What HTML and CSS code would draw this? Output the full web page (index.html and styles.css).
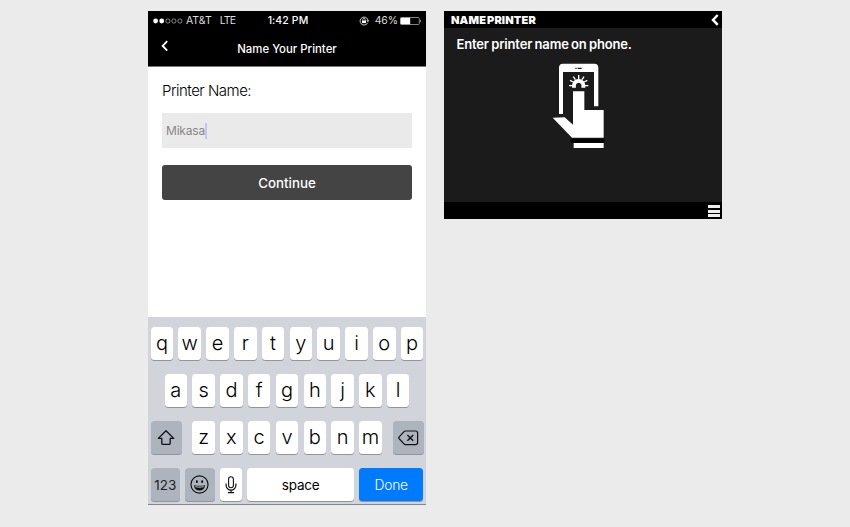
FILE: index.html
```html
<!DOCTYPE html>
<html lang="en">
<head>
<meta charset="utf-8">
<title>Name Your Printer</title>
<link rel="stylesheet" href="styles.css">
</head>
<body>
<main class="stage">
  <section class="phone">
    <header class="top">
      <div class="status">
        <div class="carrier">
          <svg class="signal" width="30" height="8" viewBox="0 0 30 8"><g fill="#fff"><circle cx="2.6" cy="4" r="2.4"/><circle cx="8.7" cy="4" r="2.4"/></g><g fill="none" stroke="#bbb" stroke-width=".7"><circle cx="14.9" cy="4" r="2.1"/><circle cx="20.9" cy="4" r="2.1"/><circle cx="26.9" cy="4" r="2.1"/></g></svg>
          <span class="att">AT&amp;T</span><span class="lte">LTE</span>
        </div>
        <span class="time">1:42 PM</span>
        <div class="power">
          <svg width="11" height="10" viewBox="0 0 11 10"><path d="M8.7 6.8A4 4 0 1 1 9 4.2" fill="none" stroke="#ddd" stroke-width=".9"/><path d="M7.4 4.3h3L8.9 6.2z" fill="#ddd"/><path d="M3 4.5h4v2.6H3z" fill="#fff"/><path d="M3.8 4.7V3.5a1.2 1.2 0 0 1 2.4 0v1.2" fill="none" stroke="#fff" stroke-width=".7"/></svg>
          <span class="pct">46%</span>
          <svg width="22" height="8" viewBox="0 0 22 8"><rect x=".5" y=".5" width="18.8" height="7" rx="1" fill="none" stroke="#bbb" stroke-width=".7"/><path d="M.6.8h9.6v6.4H.6z" fill="#fff"/><path d="M20.2 2.5q1.6 1.5 0 3z" fill="#fff"/></svg>
        </div>
      </div>
      <div class="nav">
        <svg class="back" width="8" height="12" viewBox="0 0 8 12"><path d="M6.2 1.2 1.7 5.9l4.5 4.7" fill="none" stroke="#fff" stroke-width="1.9"/></svg>
        <h1>Name Your Printer</h1>
      </div>
    </header>
    <div class="form">
      <label>Printer Name:</label>
      <div class="field"><span>Mikasa</span><i class="caret"></i></div>
      <button class="continue">Continue</button>
    </div>
    <div class="keyboard">
      <div class="row"><b>q</b><b>w</b><b>e</b><b>r</b><b>t</b><b>y</b><b>u</b><b>i</b><b>o</b><b>p</b></div>
      <div class="row"><b>a</b><b>s</b><b>d</b><b>f</b><b>g</b><b>h</b><b>j</b><b>k</b><b>l</b></div>
      <div class="row spread">
        <b class="grey wide"><svg width="20" height="18" viewBox="0 0 20 18"><path d="M10 1.8 2.3 9.4h3.5v5.2q0 .8.8.8h6.8q.8 0 .8-.8V9.4h3.5z" fill="none" stroke="#111" stroke-width="1.3" stroke-linejoin="round"/></svg></b>
        <span class="group"><b>z</b><b>x</b><b>c</b><b>v</b><b>b</b><b>n</b><b>m</b></span>
        <b class="grey wide"><svg width="21" height="16" viewBox="0 0 21 16"><path d="M7.4 1h10.2q2 0 2 2v9.6q0 2-2 2H7.4q-.8 0-1.4-.7L1 8.5q-.6-.7 0-1.4L6 1.7Q6.6 1 7.4 1z" fill="none" stroke="#111" stroke-width="1.2"/><path d="m9.4 5 5.8 5.7m0-5.7-5.8 5.7" stroke="#111" stroke-width="1.4"/></svg></b>
      </div>
      <div class="row bottom">
        <b class="grey num">123</b>
        <b class="grey emo"><svg width="19" height="19" viewBox="0 0 18 18"><circle cx="9" cy="9" r="8.1" fill="none" stroke="#111" stroke-width="1.1"/><ellipse cx="6.5" cy="6.3" rx=".9" ry="1.3"/><ellipse cx="11.5" cy="6.3" rx=".9" ry="1.3"/><path d="M3.7 9.6q5.3 1.3 10.6 0-.7 5-5.3 5t-5.3-5z" fill="#111"/><path d="M4.8 10.5q4.2 1 8.4 0l-.4 1.2q-3.8.9-7.6 0z" fill="#adb4be"/></svg></b>
        <b class="mic"><svg width="12" height="18" viewBox="0 0 12 18"><rect x="3.6" y=".7" width="4.8" height="11" rx="2.4" fill="none" stroke="#111" stroke-width="1.1"/><path d="M1.1 7.5v1.8a4.9 4.9 0 0 0 9.8 0V7.5M6 14.2v2.4M2.9 16.7h6.2" fill="none" stroke="#111" stroke-width="1.2"/></svg></b>
        <b class="space">space</b>
        <b class="done">Done</b>
      </div>
    </div>
  </section>
  <section class="printer">
    <header class="bar"><h2>NAME PRINTER</h2><svg width="8" height="12" viewBox="0 0 8 12"><path d="M6.7 1 2 5.9l4.7 4.9" fill="none" stroke="#fff" stroke-width="2.5"/></svg></header>
    <div class="screen">
      <p>Enter printer name on phone.</p>
      <svg class="touch" width="80" height="100" viewBox="0 0 240 300">
        <path fill="#fff" d="M57 177V38q0-12 12-12h94q12 0 12 12v116h-13V51H69v126z"/>
        <path stroke="#1b1b1b" stroke-width="4" d="M106 40h4m3 0h12"/>
        <path fill="none" stroke="#fff" stroke-width="4" d="M87 92h10m38 0h10M90 76l10 5m42-5-10 5M100 65l6 9m26-9-6 9M116 60v12"/>
        <path fill="#fff" d="M96 98q-1-26 20-26t20 26h-12q3-13-8-15-11 2-8 15z"/>
        <path fill="#fff" d="M99 109h34v56h58v83H96l-58-60 36-1 25 22z"/>
        <path d="M92 251h101v12H92z"/>
        <path fill="#fff" d="M101 264h90v15h-90z"/>
      </svg>
    </div>
    <footer class="foot"><i></i><i></i><i></i></footer>
  </section>
</main>
</body>
</html>
```
FILE: styles.css
```css
* { box-sizing: border-box; }
body { margin: 0; background: #ebebeb; font-family: Inter, "Liberation Sans", sans-serif; }
h1, h2, p { margin: 0; }
svg { display: block; flex: none; }
.stage { height: 527px; padding: 11px 0 0 148px; display: flex; align-items: flex-start; gap: 18px; }
.phone { width: 278px; height: 494px; background: #fff; display: flex; flex-direction: column; }
.top { height: 56px; background: #000; color: #fff; border-bottom: 1px solid #777; }
.status { height: 19px; padding: 0 4px 0 5px; display: grid; grid-template-columns: 1fr auto 1fr; align-items: center; }
.carrier, .power { display: flex; align-items: center; font-size: 10.5px; color: #ddd; }
.att { margin-left: 3px; }
.lte { margin-left: 8px; letter-spacing: -.8px; }
.time { font-size: 10.5px; font-weight: 500; letter-spacing: .1px; padding-left: 1px; }
.power { justify-content: flex-end; }
.pct { margin: 0 2px 0 5px; letter-spacing: -.1px; }
.nav { height: 36px; display: grid; grid-template-columns: 30px 1fr 30px; align-items: center; }
.back { margin: -4px 0 0 13px; }
h1 { text-align: center; font-size: 11.4px; line-height: 16px; font-weight: 500; white-space: nowrap; padding-top: 1px; }
.form { flex: 1; padding: 14px 14px 0; }
label { display: block; height: 20px; line-height: 20px; font-size: 15px; font-weight: 300; letter-spacing: -.5px; color: #000; }
.field { height: 35px; margin-top: 12px; padding-left: 4px; background: #eaeaea; display: flex; align-items: center; font-size: 12px; letter-spacing: -.2px; color: #888; }
.caret { width: 2px; height: 16px; background: #bcc8f0; }
.continue { display: block; width: 100%; height: 35px; margin-top: 17.4px; padding: 0; border: 0; border-radius: 3px; background: #444; color: #fff; font: 500 13.3px Inter, sans-serif; }
.keyboard { height: 188px; padding: 10.3px 2.5px 0; background: #d1d4db; border-bottom: 1px solid #81858d; display: flex; flex-direction: column; gap: 13.8px; }
.row { height: 33.2px; display: flex; justify-content: center; gap: 5.3px; }
.spread { justify-content: space-between; }
.group { display: flex; gap: 5.3px; }
.row b { width: 22.5px; height: 32.8px; border-radius: 3.5px; background: #fff; box-shadow: 0 1px 0 #929499; display: flex; flex: none; align-items: center; justify-content: center; font-size: 20px; line-height: 28px; font-weight: 350; color: #000; padding-bottom: 1px; }
.row .grey { background: #adb4be; padding: 0; }
.row .wide { width: 31px; }
.bottom { gap: 5px; justify-content: space-between; }
.row .num { width: 29.5px; font-size: 13.5px; font-weight: 400; color: #222; padding-top: 1px; }
.row .emo { width: 29.5px; }
.row .mic { padding: 0; }
.row .space { width: 106.4px; font-size: 13.5px; font-weight: 400; letter-spacing: -.2px; padding: 0; }
.row .done { width: 64.5px; font-size: 13.8px; font-weight: 350; letter-spacing: -.2px; padding: 0; background: #007aff; color: #fff; }
.printer { width: 278px; height: 208px; background: #1b1b1b; display: flex; flex-direction: column; }
.bar { height: 17px; padding: 0 3px 0 7px; background: #000; display: flex; align-items: center; justify-content: space-between; color: #fff; }
h2 { font-size: 11px; font-weight: 900; letter-spacing: .15px; word-spacing: -1.4px; line-height: 17px; padding-top: 1px; white-space: nowrap; }
.screen { flex: 1; color: #fff; }
.screen p { height: 27px; padding: 7.4px 0 0 12.5px; line-height: 18px; font-size: 13px; font-weight: 600; letter-spacing: -.15px; word-spacing: -.8px; white-space: nowrap; }
.touch { margin-left: 96px; }
.foot { height: 17px; padding: 3px 2px 0 0; background: #000; display: flex; flex-direction: column; align-items: flex-end; gap: 1.5px; }
.foot i { width: 12px; height: 3px; background: #eee; }
```
